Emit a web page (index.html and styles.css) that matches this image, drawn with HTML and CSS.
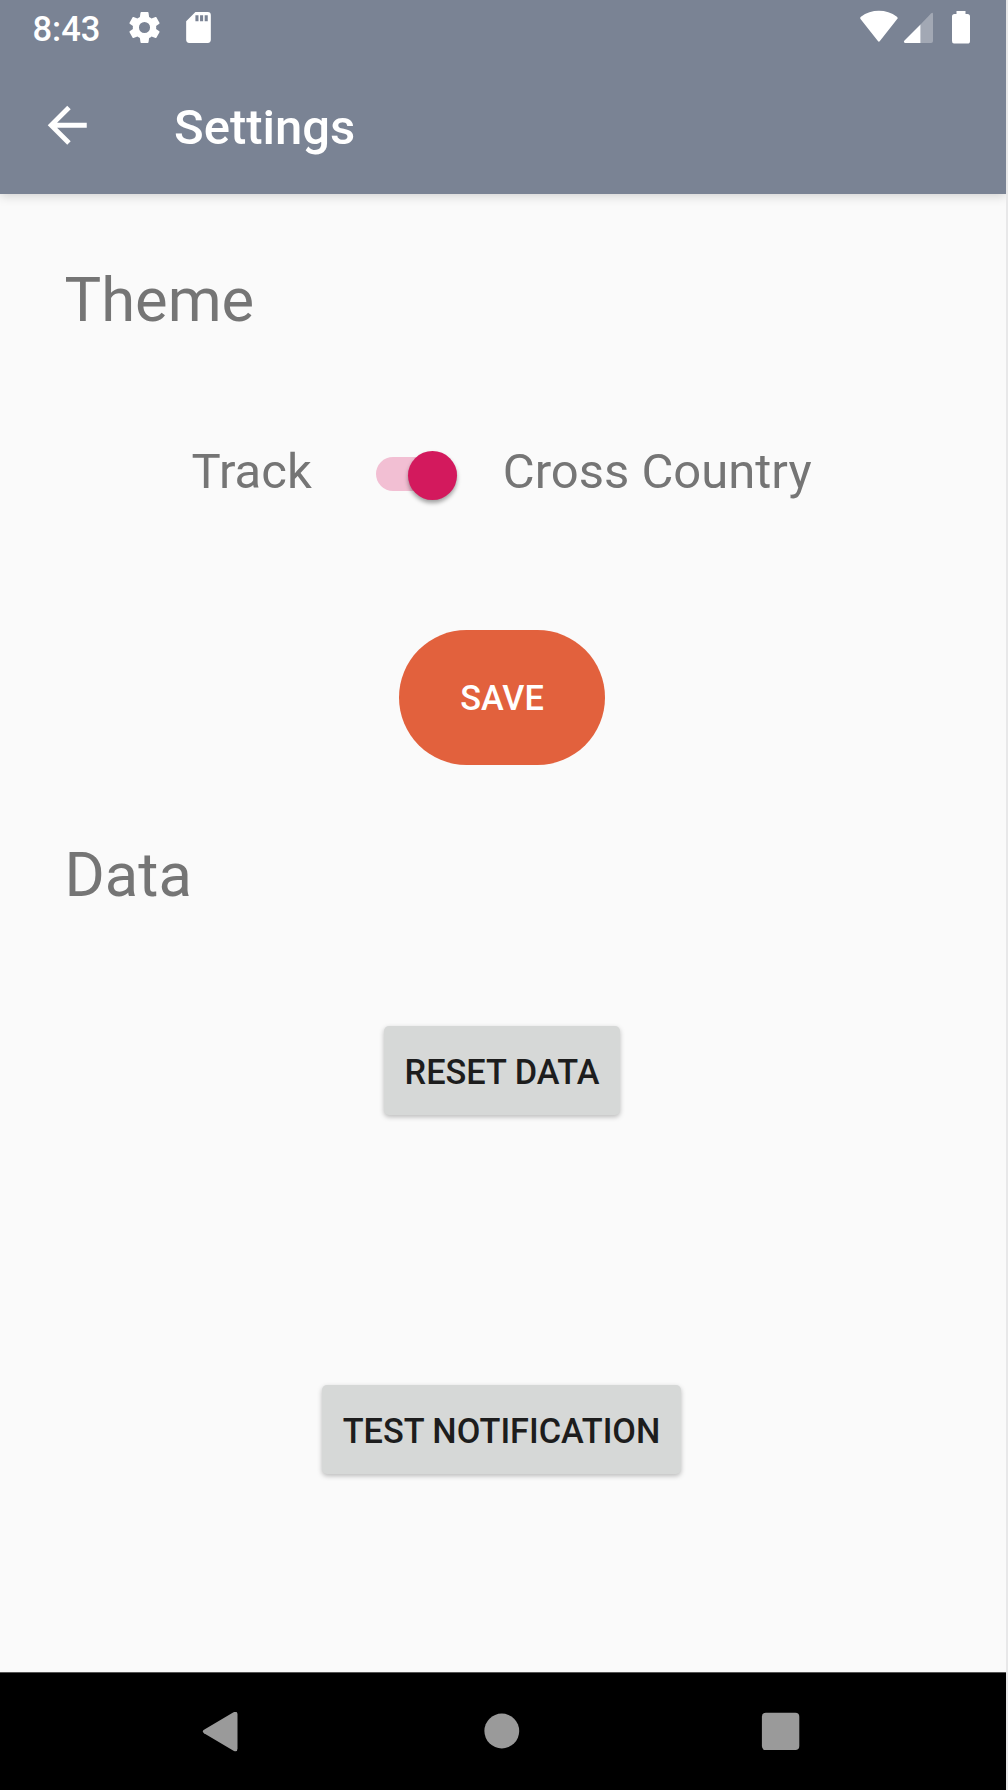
FILE: index.html
```html
<!DOCTYPE html>
<html lang="en">
<head>
<meta charset="utf-8">
<title>Settings</title>
<link rel="stylesheet" href="styles.css">
</head>
<body>
<div class="screen">
  <header class="header">
    <div class="status-bar">
      <span class="clock">8:43</span>
      <svg class="status-icon gear" viewBox="0 0 24 24"><path d="M19.5 12.9c.1-.3.1-.6.1-.9s0-.6-.1-.9l2.1-1.6c.2-.2.2-.4.1-.6l-2-3.500c-.1-.2-.4-.3-.6-.2l-2.500 1c-.5-.4-1-.7-1.600-1l-.4-2.700c0-.3-.2-.5-.5-.5h-4.200c-.2 0-.4.2-.5.5l-.4 2.700c-.6.2-1.100.6-1.600 1l-2.500-1c-.2-.1-.5 0-.6.2l-2 3.500c-.1.2-.1.5.1.6l2.100 1.600c0 .3-.1.600-.1.900s0 .6.1.9l-2.100 1.600c-.2.2-.2.4-.1.6l2 3.500c.1.2.4.3.6.2l2.500-1c.5.4 1 .7 1.600 1l.4 2.700c0 .3.2.5.5.5h4.200c.2 0 .5-.2.5-.5l.4-2.700c.6-.2 1.100-.6 1.600-1l2.500 1c.2.1.5 0 .6-.2l2-3.500c.1-.2.1-.5-.1-.6zM12 15.600a3.600 3.600 0 1 1 0-7.200 3.600 3.600 0 0 1 0 7.200z"/></svg>
      <svg class="status-icon card" viewBox="0 0 24 24"><path d="M18 2h-8L4 8v12a2 2 0 0 0 2 2h12a2 2 0 0 0 2-2V4a2 2 0 0 0-2-2zm-6 6h-2V4h2zm3 0h-2V4h2zm3 0h-2V4h2z"/></svg>
      <svg class="system-icons" viewBox="0 0 112 36"><path d="M.7 9.300Q-.5 8 .9 6.700C11.400-1.200 26.400-1.200 36.900 6.700Q38.400 8 37 9.300L19.900 31Q18.900 32.500 17.900 31z"/><path class="signal-rest" d="M73 4.200V31q0 2-2 2H60.500V14.500L71 3.500Q73 1.800 73 4.200z"/><path d="M60.500 14.500V33H45q-2-1-.5-2.500z"/><path d="M96.500 4V1h9v3h2q2.500 0 2.500 2.500V31q0 2.600-2.500 2.600H94Q92 33.600 92 31V6.500Q92 4 94.500 4z"/></svg>
    </div>
    <div class="app-bar">
      <svg class="back" viewBox="0 0 24 24"><path d="M20 11H7.830l5.590-5.590L12 4l-8 8 8 8 1.410-1.410L7.830 13H20z"/></svg>
      <h1 class="title">Settings</h1>
    </div>
  </header>
  <main class="content">
    <h2 class="section">Theme</h2>
    <div class="theme-row">
      <span class="option">Track</span>
      <div class="switch"><div class="thumb"></div></div>
      <span class="option">Cross Country</span>
    </div>
    <button class="save">SAVE</button>
    <h2 class="section data">Data</h2>
    <button class="button reset">RESET DATA</button>
    <button class="button test">TEST NOTIFICATION</button>
  </main>
  <nav class="nav-bar">
    <svg viewBox="0 0 40 40"><path d="M3 17.800 32.500.3Q36.500-1.500 36.500 2.500v34q0 4-4 2.200L3 21.200Q.5 19.500 3 17.800z"/></svg>
    <svg viewBox="0 0 40 40"><circle cx="20.800" cy="19" r="17.400"/></svg>
    <svg viewBox="0 0 40 40"><rect x=".9" y=".7" width="37.400" height="37.400" rx="4"/></svg>
  </nav>
</div>
</body>
</html>
```
FILE: styles.css
```css
body {
  margin: 0;
  background: #e8e8e9;
  font-family: Roboto, "Liberation Sans", sans-serif;
}
.screen {
  display: flex;
  flex-direction: column;
  width: 1006px;
  height: 1790px;
  background: #fafafa;
  overflow: hidden;
}
.header {
  height: 194px;
  background: #7a8394;
  color: #fff;
  fill: #fff;
  box-shadow: 0 2px 10px rgba(0, 0, 0, 0.17);
}
.status-bar {
  display: flex;
  align-items: center;
  height: 56px;
  padding: 0 34px 0 32.5px;
}
.clock {
  width: 93.5px;
  font-size: 34.5px;
  font-weight: 500;
  line-height: 56px;
  padding-top: 2px;
}
.status-icon {
  width: 37px;
  height: 37px;
  margin-bottom: 1px;
}
.card {
  margin-left: 17px;
}
.system-icons {
  width: 112px;
  height: 36px;
  margin-left: auto;
}
.signal-rest {
  opacity: 0.3;
}
.app-bar {
  display: flex;
  align-items: center;
  height: 138px;
  padding-left: 37.5px;
}
.back {
  width: 58.5px;
  height: 58.5px;
  margin-top: 1px;
}
.title {
  margin: 6px 0 0 78px;
  font-size: 49px;
  font-weight: 500;
  line-height: 60px;
}
.content {
  display: flex;
  flex-direction: column;
  align-items: center;
  flex: 1;
}
.section {
  align-self: flex-start;
  margin: 66px 0 0 64.5px;
  font-size: 61.5px;
  font-weight: 400;
  line-height: 80px;
  color: #757575;
}
.theme-row {
  display: flex;
  align-items: center;
  align-self: flex-start;
  margin: 102px 0 0 191.5px;
  height: 60px;
}
.option {
  font-size: 49px;
  line-height: 60px;
  color: #757575;
}
.switch {
  display: flex;
  align-items: center;
  justify-content: flex-end;
  width: 81px;
  height: 34px;
  margin: 4px 46px 0 64px;
  border-radius: 17px;
  background: #f2bfd3;
}
.thumb {
  width: 49px;
  height: 49px;
  flex: none;
  margin-top: 2px;
  border-radius: 50%;
  background: #d3195d;
  box-shadow: 0 3px 4px rgba(0, 0, 0, 0.36);
}
.save {
  width: 206px;
  height: 134.500px;
  margin: 128px 0 0 -2px;
  padding: 2px 0 0;
  border: 0;
  border-radius: 68px;
  background: #e2613d;
  color: #fff;
  font: 500 34.300px Roboto, sans-serif;
}
.data {
  margin-top: 70.500px;
}
.button {
  height: 89px;
  margin-left: -2px;
  padding: 3px 0 0;
  border: 0;
  border-radius: 5px;
  background: #d6d8d7;
  color: #1d1d1d;
  font: 500 34.300px Roboto, sans-serif;
  box-shadow: 0 2px 5px rgba(0, 0, 0, 0.26);
}
.reset {
  width: 236px;
  margin-top: 111px;
}
.test {
  width: 359px;
  margin-top: 270px;
  margin-left: -3px;
}
.nav-bar {
  display: flex;
  align-items: center;
  justify-content: space-between;
  height: 117px;
  padding: 0 205px 0 201px;
  border-top: 1px solid #555;
  background: #000;
  fill: #9a9a9a;
}
.nav-bar svg {
  width: 40px;
  height: 40px;
}
```
